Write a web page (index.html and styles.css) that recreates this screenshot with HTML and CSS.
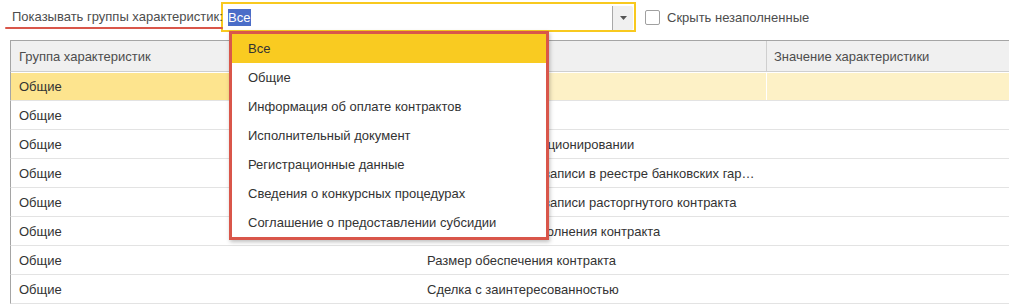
FILE: index.html
```html
<!DOCTYPE html>
<html lang="ru">
<head>
  <meta charset="UTF-8" />
  <title>Характеристики</title>
  <link rel="stylesheet" href="styles.css">
</head>
<body>
  <div class="toolbar">
    <span class="filter-label">Показывать группы характеристик:</span>
    <div class="combo">
      <span class="combo-value"><span class="sel">Все</span></span>
      <span class="combo-btn">
        <svg width="7" height="4" viewBox="0 0 7 4"><path d="M0 0h7L3.5 4z" fill="#555"/></svg>
      </span>
    </div>
    <label class="check"><span class="box"></span>Скрыть незаполненные</label>
  </div>

  <table class="grid">
    <colgroup>
      <col style="width:409px">
      <col style="width:347px">
      <col>
    </colgroup>
    <thead>
      <tr>
        <th>Группа характеристик</th>
        <th>Характеристика</th>
        <th>Значение характеристики</th>
      </tr>
    </thead>
    <tbody>
      <tr class="current"><td>Общие</td><td>Номер контракта</td><td></td></tr>
      <tr><td>Общие</td><td>Цена контракта</td><td></td></tr>
      <tr><td>Общие</td><td>Информация о санкционировании</td><td></td></tr>
      <tr><td>Общие</td><td>Номер реестровой записи в реестре банковских гарантий</td><td></td></tr>
      <tr><td>Общие</td><td>Номер реестровой записи расторгнутого контракта</td><td></td></tr>
      <tr><td>Общие</td><td>Дата окончания исполнения контракта</td><td></td></tr>
      <tr><td>Общие</td><td>Размер обеспечения контракта</td><td></td></tr>
      <tr><td>Общие</td><td>Сделка с заинтересованностью</td><td></td></tr>
    </tbody>
  </table>

  <div class="popup">
    <div class="item active">Все</div>
    <div class="item">Общие</div>
    <div class="item">Информация об оплате контрактов</div>
    <div class="item">Исполнительный документ</div>
    <div class="item">Регистрационные данные</div>
    <div class="item">Сведения о конкурсных процедурах</div>
    <div class="item">Соглашение о предоставлении субсидии</div>
  </div>
</body>
</html>
```

FILE: styles.css
```css
body {
  margin: 0;
  font-family: 'Liberation Sans', Arial, sans-serif;
  font-size: 13px;
  color: #333;
  background: #fff;
  overflow: hidden;
  position: relative;
}
.toolbar {
  display: flex;
  align-items: center;
  height: 30px;
  margin-top: 2px;
  padding-left: 12px;
}
.filter-label {
  position: relative;
  display: block;
  width: 209px;
  flex: none;
  height: 30px;
  line-height: 30px;
  color: #4d4d4d;
  white-space: nowrap;
}
.filter-label::after {
  content: '';
  position: absolute;
  left: -7px;
  right: -2px;
  bottom: 3px;
  height: 2px;
  border-radius: 1px;
  background: #d9564a;
}
.combo {
  display: flex;
  align-items: center;
  width: 415px;
  height: 30px;
  box-sizing: border-box;
  border: 2px solid #f8c91f;
  flex: none;
}
.combo-value {
  flex: 1;
  padding-left: 5px;
}
.sel {
  display: inline-block;
  background: #4a6dc8;
  color: #fff;
  line-height: 17px;
  padding: 0 1px 0 0;
}
.combo-btn {
  display: flex;
  align-items: center;
  justify-content: center;
  align-self: flex-end;
  width: 20px;
  height: 24px;
  margin-right: 1px;
  background: #f0f0f0;
  border-left: 1px solid #a8a8a8;
  border-radius: 0 2px 2px 0;
}
.check {
  display: flex;
  align-items: center;
  margin-left: 9px;
  color: #4d4d4d;
}
.check .box {
  width: 15px;
  height: 15px;
  box-sizing: border-box;
  border: 1px solid #a0a0a0;
  border-radius: 2px;
  background: #fff;
  margin-right: 7px;
}
.grid {
  table-layout: fixed;
  width: 999px;
  margin: 8px 0 0 10px;
  border-collapse: separate;
  border-spacing: 0;
}
.grid th {
  height: 30px;
  padding: 0 8px;
  background: #f0f0f0;
  border-top: 1px solid #a5a5a5;
  border-bottom: 1px solid #cfcfcf;
  text-align: left;
  font-weight: normal;
  color: #4d4d4d;
  white-space: nowrap;
}
.grid th + th {
  box-shadow: inset 1px 0 0 #cfcfcf;
}
.grid th:first-child,
.grid td:first-child {
  border-left: 1px solid #a5a5a5;
}
.grid td {
  height: 28px;
  padding: 0 8px;
  border-bottom: 1px solid #e3e3e3;
  white-space: nowrap;
  overflow: hidden;
  text-overflow: ellipsis;
}
.grid tr.current td {
  background: #fdf1c6;
  box-shadow: inset 0 1px 0 #fff;
}
.grid tr.current td:first-child {
  background: #fde48e;
}
.grid tr.current td + td {
  box-shadow: inset 0 1px 0 #fff, inset 1px 0 0 #fff;
}
.popup {
  position: absolute;
  left: 229px;
  top: 31px;
  width: 320px;
  box-sizing: border-box;
  border: 3px solid #d9564a;
  background: #fff;
  box-shadow: 1px 2px 4px rgba(0,0,0,0.25);
}
.popup .item {
  height: 29px;
  line-height: 29px;
  padding-left: 16px;
  color: #333;
  white-space: nowrap;
}
.popup .item.active {
  background: #f9cb21;
}
```
